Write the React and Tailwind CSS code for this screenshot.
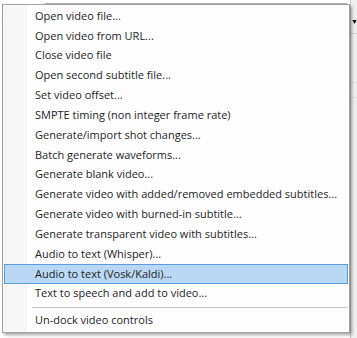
const ITEMS = [
  "Open video file...",
  "Open video from URL...",
  "Close video file",
  "Open second subtitle file...",
  "Set video offset...",
  "SMPTE timing (non integer frame rate)",
  "Generate/import shot changes...",
  "Batch generate waveforms...",
  "Generate blank video...",
  "Generate video with added/removed embedded subtitles...",
  "Generate video with burned-in subtitle...",
  "Generate transparent video with subtitles...",
  "Audio to text (Whisper)...",
  "Audio to text (Vosk/Kaldi)...",
  "Text to speech and add to video...",
];

const ACTIVE = "Audio to text (Vosk/Kaldi)...";

function MenuItem({ label, active }) {
  return (
    <div
      className={`h-[19.85px] flex items-center pl-[30px] mx-[1px] border ${
        active ? "bg-[#b9d8f5] border-[#5b9be0]" : "border-transparent"
      }`}
    >
      <span className="text-[11px] text-[#1e1e1e] whitespace-nowrap">{label}</span>
    </div>
  );
}

export default function App() {
  return (
    <div
      className="relative w-[357px] h-[338px] overflow-hidden bg-white"
      style={{ fontFamily: '"Open Sans", "Noto Sans", sans-serif' }}
    >
      {/* what sits behind the menu */}
      <div className="ml-[45px] mr-[10px] h-[4px] border-b border-[#adadad] bg-white" />
      <div className="absolute right-0 top-0 w-[7px] h-full bg-[#f0f0f0] border-l border-[#c8c8c8]">
        <div className="mt-[18px] text-[7px] leading-none text-black">▼</div>
        <div className="mt-[8px] border-t border-[#d6d6d6]" />
        <div className="mt-[48px] border-t border-[#e2e2e2]" />
        <div className="mt-[14px] border-t border-[#e2e2e2]" />
      </div>
      <div className="absolute left-0 top-[19px] text-[7px] leading-none text-[#3c7fd0]">▼</div>

      {/* the context menu */}
      <div className="absolute left-[2px] top-[4px] w-[348px] bg-[#fdfdfd] border border-[#a0a0a0] shadow-[2px_2px_3px_rgba(0,0,0,0.35)] pt-[1px] pb-[1px]">
        <div className="absolute left-0 top-0 bottom-0 w-[24px] bg-[#f7f7f7]" />
        <div className="relative">
          {ITEMS.map((label) => (
            <MenuItem key={label} label={label} active={label === ACTIVE} />
          ))}
          <div className="h-[7px] flex items-center pl-[29px] pr-[1px]">
            <div className="w-full border-t border-[#c4c4c4]" />
          </div>
          <MenuItem label="Un-dock video controls" />
        </div>
      </div>
    </div>
  );
}
